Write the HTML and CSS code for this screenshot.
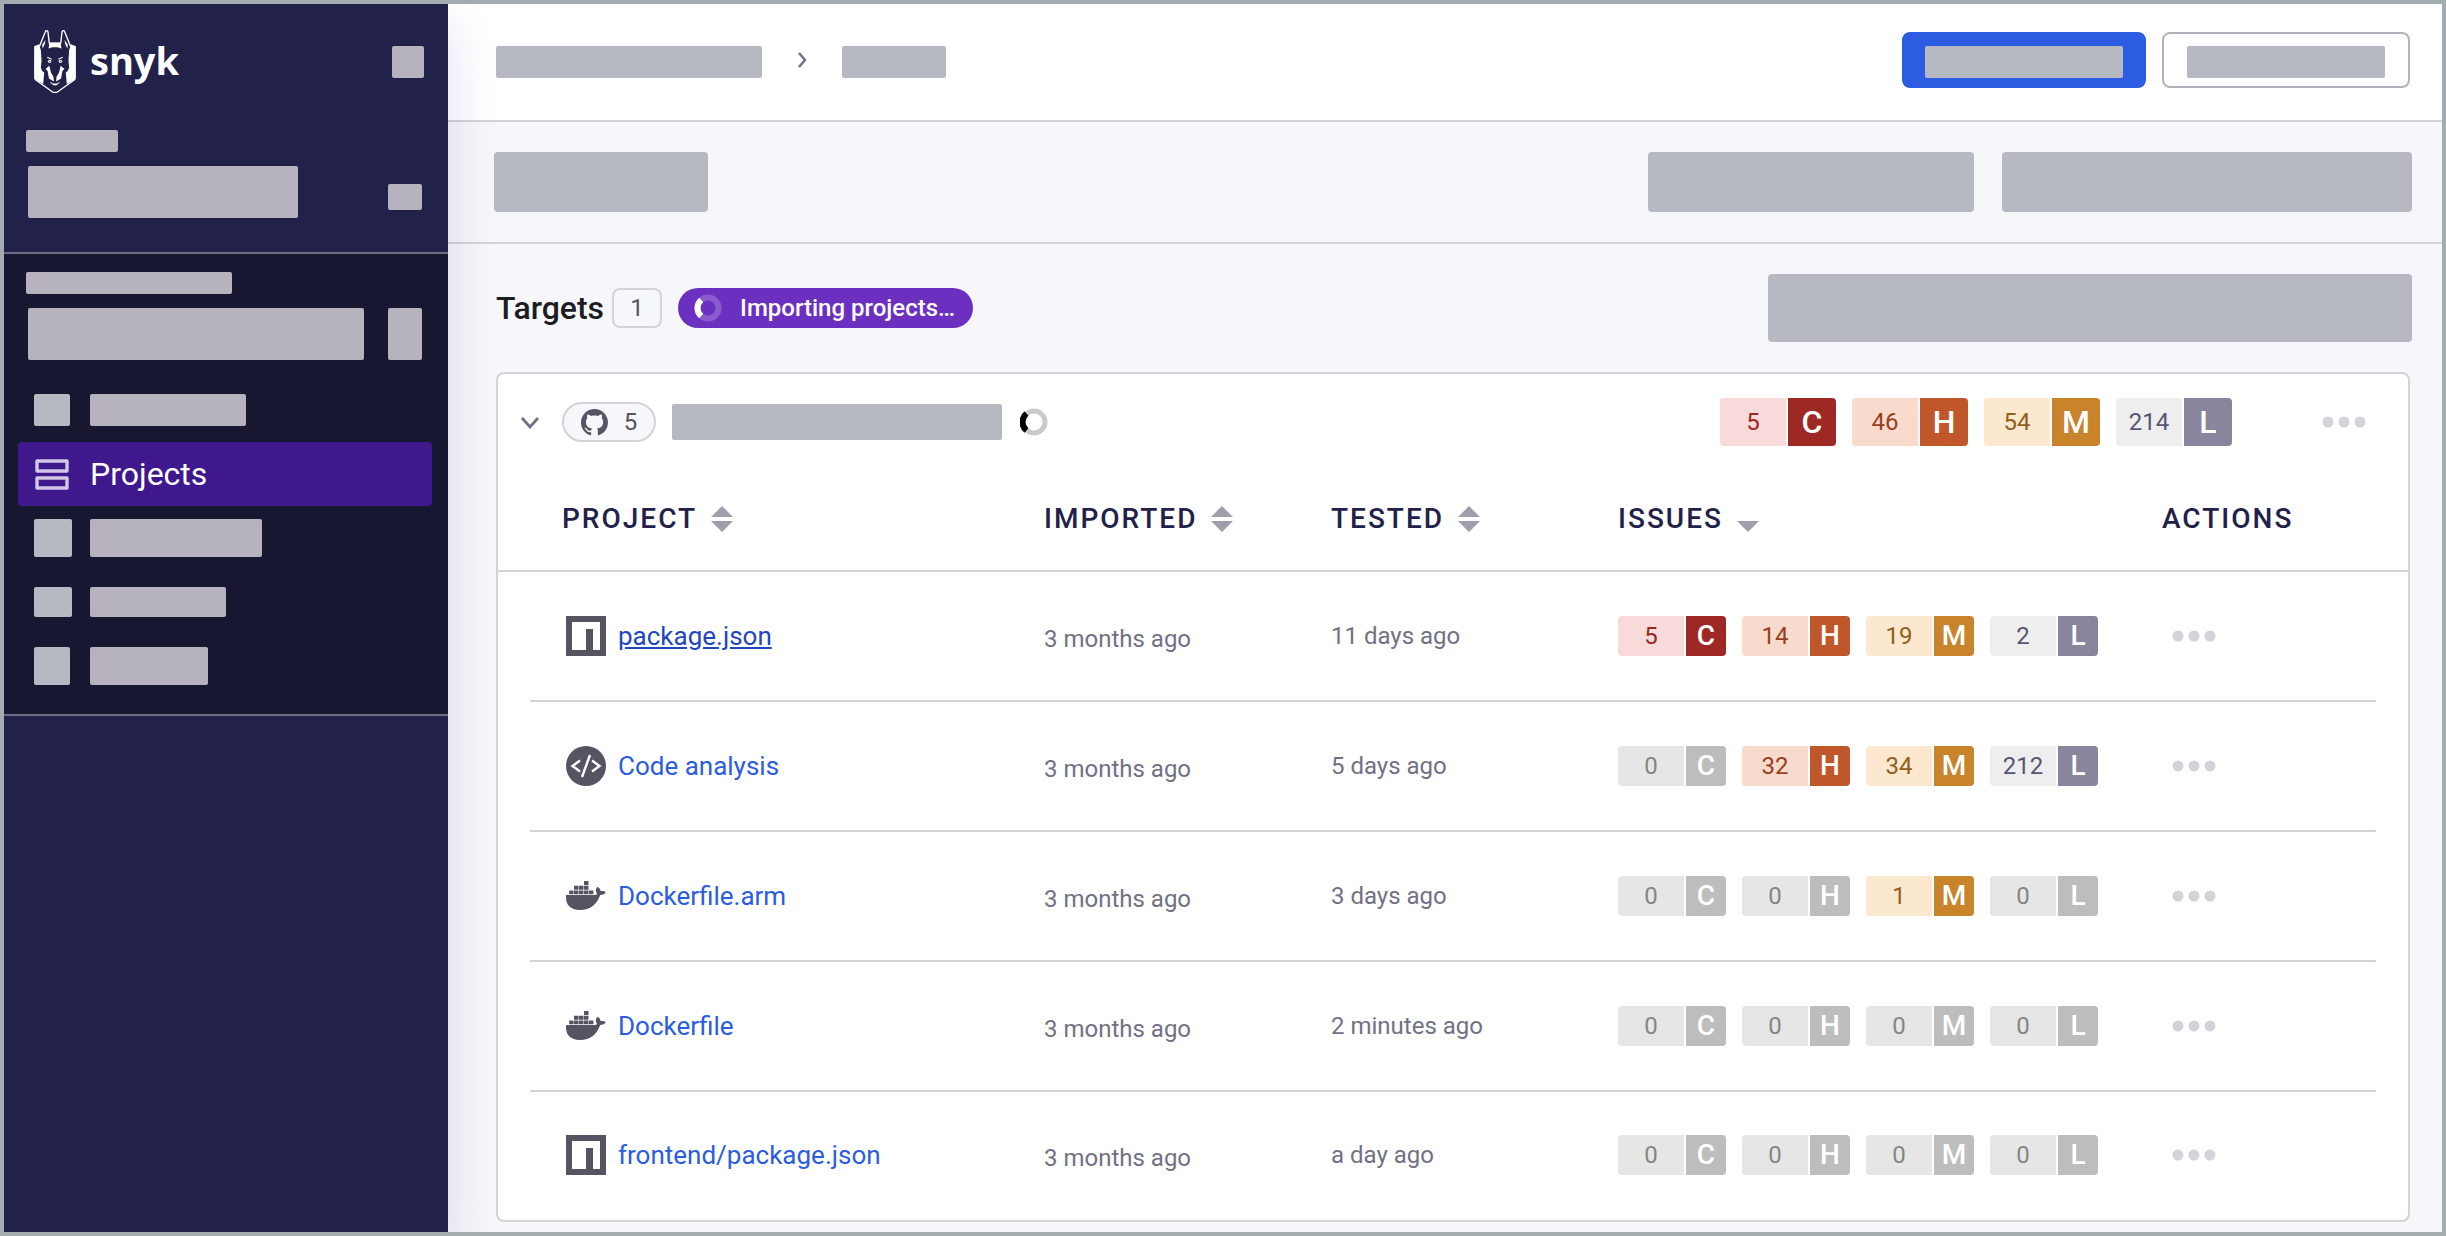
FILE: index.html
```html
<!DOCTYPE html>
<html lang="en">
<head>
<meta charset="utf-8">
<meta name="viewport" content="width=device-width, initial-scale=1">
<title>Snyk – Projects</title>
<link rel="stylesheet" href="styles.css">
</head>
<body>
<svg class="sprite" aria-hidden="true">
  <symbol id="npm" viewBox="0 0 40 40">
    <path fill="#555463" d="M0 0h40v40H0z"/>
    <path fill="#fff" d="M6 6h28v28h-7V13h-7v21H6z"/>
  </symbol>
  <symbol id="code" viewBox="0 0 40 40">
    <circle cx="20" cy="20" r="20" fill="#555463"/>
    <path d="M14 14.500L6.500 20l7.500 5.500M26 14.500l7.500 5.500-7.500 5.500M24 9l-8 22" fill="none" stroke="#fff" stroke-width="2.400"/>
  </symbol>
  <symbol id="docker" viewBox="0 0 40 40">
    <path fill="#555463" d="M18 5h4.500v4H18zM8 9.800h4.500v3.900H8zM13 9.800h4.500v3.900H13zM18 9.800h4.500v3.900H18zM3.200 14.400h4.300v3.900H3.200zM8 14.400h4.500v3.900H8zM13 14.400h4.500v3.900H13zM18 14.400h4.500v3.900H18zM23 14.400h4.400v3.900H23zM0 19h27.500c1.700 0 3-.3 3.600-1-1.600-2-1.800-4.700.3-7.200 2.200 1.200 3 2.600 3.100 4.300 2-.4 3.800-.2 5.300 1-1.100 2.300-3 3-5.600 3C31 28.500 24.500 34 14 34 4 34 0 28.500 0 21z"/>
  </symbol>
  <symbol id="dots" viewBox="0 0 44 12">
    <circle cx="6" cy="6" r="5.500"/><circle cx="22" cy="6" r="5.500"/><circle cx="38" cy="6" r="5.500"/>
  </symbol>
  <symbol id="sort" viewBox="0 0 22 26">
    <path d="M11 0l11 11H0zM0 15h22L11 26z"/>
  </symbol>
  <symbol id="sort-down" viewBox="0 0 22 26">
    <path d="M0 15h22L11 26z"/>
  </symbol>
</svg>

<div class="app">
  <aside class="sidebar">
    <div class="sidebar__top">
      <div class="brand">
        <a class="brand__link" href="#">
          <svg class="brand__mark" viewBox="0 0 124 190" aria-hidden="true">
            <g fill="none" stroke="#fff" stroke-width="4" stroke-linejoin="round">
              <path d="M16 48L34 4q3-5 7 1l4 34h34l4-34q4-6 7-1l18 44"/>
              <path d="M2 146l54 39h12l54-39"/>
              <path d="M39 81l13 6M85 81l-13 6M49 155q13 16 26 0M55 160h14" stroke-width="3"/>
            </g>
            <g fill="#fff">
              <path d="M0 48l15-6 5 18 2 30-2 22 4 10 6 4-3 34-27-15zM124 48l-15-6-5 18-2 30 2 22-4 10-6 4 3 34 27-15z"/>
              <path d="M45 38h34l2 17-11-4H54l-11 4zM34 30l-3 14-6 11-1-12zM90 30l3 14 6 11 1-12z"/>
              <path d="M34 116l11-10 5 20 7 12 2 15-15-9-4-22zM90 116l-11-10-5 20-7 12-2 15 15-9 4-22z"/>
              <circle cx="46" cy="93" r="5"/><circle cx="78" cy="93" r="5"/>
            </g>
            <circle cx="46" cy="93" r="2" fill="#22214a"/><circle cx="78" cy="93" r="2" fill="#22214a"/>
          </svg>
          <span class="brand__name">snyk</span>
        </a>
        <span class="bar bar--side brand__toggle"></span>
      </div>
      <span class="bar bar--side side-label side-label--short"></span>
      <div class="side-row">
        <span class="bar bar--side side-field side-field--group"></span>
        <span class="bar bar--side side-chip side-chip--small"></span>
      </div>
    </div>
    <div class="sidebar__org">
      <span class="bar bar--side side-label side-label--long"></span>
      <div class="side-row">
        <span class="bar bar--side side-field side-field--org"></span>
        <span class="bar bar--side side-chip"></span>
      </div>
      <nav class="nav">
        <a class="nav__item nav__item--a" href="#"><span class="bar nav__icon"></span><span class="bar bar--side nav__text"></span></a>
        <a class="nav__item nav__item--active" href="#" aria-current="page">
          <svg class="nav__glyph" viewBox="0 0 36 32" aria-hidden="true"><path d="M3 3h30v10H3zM3 20h30v10H3z" fill="none" stroke="#d3c8e8" stroke-width="3.400" stroke-linejoin="round"/></svg>
          <span>Projects</span>
        </a>
        <a class="nav__item nav__item--b" href="#"><span class="bar nav__icon"></span><span class="bar bar--side nav__text"></span></a>
        <a class="nav__item nav__item--c" href="#"><span class="bar nav__icon"></span><span class="bar bar--side nav__text"></span></a>
        <a class="nav__item nav__item--d" href="#"><span class="bar nav__icon"></span><span class="bar bar--side nav__text"></span></a>
      </nav>
    </div>
  </aside>

  <main class="main">
    <header class="topbar">
      <nav class="crumbs">
        <a class="bar bar--label crumbs__parent" href="#"></a>
        <svg class="crumbs__sep" viewBox="0 0 10 16" aria-hidden="true"><path d="M2 1l6 7-6 7" fill="none" stroke="#727184" stroke-width="2.500"/></svg>
        <span class="bar bar--label crumbs__current"></span>
      </nav>
      <div class="topbar__actions">
        <button class="btn btn--primary" type="button"><span class="bar bar--label btn__text"></span></button>
        <button class="btn btn--outline" type="button"><span class="bar bar--label btn__text"></span></button>
      </div>
    </header>

    <div class="toolbar">
      <span class="bar toolbar__title"></span>
      <span class="bar toolbar__group"></span>
      <span class="bar toolbar__filter"></span>
    </div>

    <div class="targets">
      <h1 class="targets__title">Targets</h1>
      <span class="targets__count">1</span>
      <span class="status">
        <svg class="status__spinner" viewBox="0 0 28 28" aria-hidden="true"><circle cx="14" cy="14" r="10.500" fill="none" stroke="#8a5bcd" stroke-width="6"/><path d="M7.200 22A10.500 10.500 0 017.200 6" fill="none" stroke="#fff" stroke-width="6"/></svg>
        Importing projects…
      </span>
      <span class="bar targets__search"></span>
    </div>

    <section class="card">
      <div class="card__head">
        <button class="card__toggle" type="button" aria-label="Collapse"><svg viewBox="0 0 24 24" width="24" height="24" aria-hidden="true"><path d="M4 8l8 9 8-9" fill="none" stroke="#727184" stroke-width="2.800"/></svg></button>
        <span class="source">
          <svg viewBox="0 0 16 16" width="27" height="27" aria-hidden="true"><path fill="#555463" d="M8 0C3.580 0 0 3.580 0 8c0 3.540 2.290 6.530 5.470 7.590.4.070.55-.17.55-.38 0-.19-.01-.82-.01-1.490-2.010.37-2.530-.49-2.690-.94-.09-.23-.48-.94-.82-1.130-.28-.15-.68-.52-.01-.53.63-.01 1.080.58 1.230.82.72 1.210 1.870.87 2.330.66.070-.52.28-.87.51-1.070-1.780-.2-3.640-.89-3.640-3.950 0-.87.31-1.590.82-2.150-.08-.2-.36-1.020.08-2.120 0 0 .67-.21 2.200.82.64-.18 1.320-.27 2-.27s1.360.09 2 .27c1.530-1.040 2.200-.82 2.200-.82.44 1.100.16 1.920.08 2.120.51.56.82 1.270.82 2.150 0 3.070-1.870 3.750-3.650 3.950.29.25.54.73.54 1.480 0 1.070-.01 1.930-.01 2.200 0 .21.15.46.55.38A8.010 8.010 0 0016 8c0-4.420-3.580-8-8-8z"/></svg>
          5
        </span>
        <span class="bar card__name"></span>
        <svg class="card__spinner" viewBox="0 0 28 28" aria-hidden="true"><circle cx="14" cy="14" r="11" fill="none" stroke="#cacaca" stroke-width="5"/><path d="M6.500 22.500A11 11 0 016.500 5.500" fill="none" stroke="#000" stroke-width="6"/></svg>
        <div class="badges badges--large">
          <span class="badge badge--c"><span>5</span><b>C</b></span>
          <span class="badge badge--h"><span>46</span><b>H</b></span>
          <span class="badge badge--m"><span>54</span><b>M</b></span>
          <span class="badge badge--l"><span>214</span><b>L</b></span>
        </div>
        <button class="more" type="button" aria-label="More"><svg class="more__dots"><use href="#dots"/></svg></button>
      </div>

      <table class="projects">
        <colgroup><col><col class="col-date"><col class="col-date"><col class="col-issues"><col class="col-actions"></colgroup>
        <thead>
          <tr>
            <th class="first"><button class="sort" type="button">PROJECT<svg class="sort__icon"><use href="#sort"/></svg></button></th>
            <th><button class="sort" type="button">IMPORTED<svg class="sort__icon"><use href="#sort"/></svg></button></th>
            <th><button class="sort" type="button">TESTED<svg class="sort__icon"><use href="#sort"/></svg></button></th>
            <th><button class="sort" type="button">ISSUES<svg class="sort__icon"><use href="#sort-down"/></svg></button></th>
            <th>ACTIONS</th>
          </tr>
        </thead>
        <tbody>
          <tr>
            <td class="first"><div class="project"><svg class="project__icon"><use href="#npm"/></svg><a class="project__link project__link--hover" href="#">package.json</a></div></td>
            <td class="imported">3 months ago</td>
            <td>11 days ago</td>
            <td><div class="badges">
              <span class="badge badge--c"><span>5</span><b>C</b></span>
              <span class="badge badge--h"><span>14</span><b>H</b></span>
              <span class="badge badge--m"><span>19</span><b>M</b></span>
              <span class="badge badge--l"><span>2</span><b>L</b></span>
            </div></td>
            <td><button class="more more--row" type="button" aria-label="More"><svg class="more__dots"><use href="#dots"/></svg></button></td>
          </tr>
          <tr>
            <td class="first"><div class="project"><svg class="project__icon"><use href="#code"/></svg><a class="project__link" href="#">Code analysis</a></div></td>
            <td class="imported">3 months ago</td>
            <td>5 days ago</td>
            <td><div class="badges">
              <span class="badge"><span>0</span><b>C</b></span>
              <span class="badge badge--h"><span>32</span><b>H</b></span>
              <span class="badge badge--m"><span>34</span><b>M</b></span>
              <span class="badge badge--l"><span>212</span><b>L</b></span>
            </div></td>
            <td><button class="more more--row" type="button" aria-label="More"><svg class="more__dots"><use href="#dots"/></svg></button></td>
          </tr>
          <tr>
            <td class="first"><div class="project"><svg class="project__icon"><use href="#docker"/></svg><a class="project__link" href="#">Dockerfile.arm</a></div></td>
            <td class="imported">3 months ago</td>
            <td>3 days ago</td>
            <td><div class="badges">
              <span class="badge"><span>0</span><b>C</b></span>
              <span class="badge"><span>0</span><b>H</b></span>
              <span class="badge badge--m"><span>1</span><b>M</b></span>
              <span class="badge"><span>0</span><b>L</b></span>
            </div></td>
            <td><button class="more more--row" type="button" aria-label="More"><svg class="more__dots"><use href="#dots"/></svg></button></td>
          </tr>
          <tr>
            <td class="first"><div class="project"><svg class="project__icon"><use href="#docker"/></svg><a class="project__link" href="#">Dockerfile</a></div></td>
            <td class="imported">3 months ago</td>
            <td>2 minutes ago</td>
            <td><div class="badges">
              <span class="badge"><span>0</span><b>C</b></span>
              <span class="badge"><span>0</span><b>H</b></span>
              <span class="badge"><span>0</span><b>M</b></span>
              <span class="badge"><span>0</span><b>L</b></span>
            </div></td>
            <td><button class="more more--row" type="button" aria-label="More"><svg class="more__dots"><use href="#dots"/></svg></button></td>
          </tr>
          <tr>
            <td class="first"><div class="project"><svg class="project__icon"><use href="#npm"/></svg><a class="project__link" href="#">frontend/package.json</a></div></td>
            <td class="imported">3 months ago</td>
            <td>a day ago</td>
            <td><div class="badges">
              <span class="badge"><span>0</span><b>C</b></span>
              <span class="badge"><span>0</span><b>H</b></span>
              <span class="badge"><span>0</span><b>M</b></span>
              <span class="badge"><span>0</span><b>L</b></span>
            </div></td>
            <td><button class="more more--row" type="button" aria-label="More"><svg class="more__dots"><use href="#dots"/></svg></button></td>
          </tr>
        </tbody>
      </table>
    </section>
  </main>
</div>
</body>
</html>
```
FILE: styles.css
```css
*, *::before, *::after { box-sizing: border-box; }

body {
  margin: 0;
  font-family: Roboto, "Liberation Sans", sans-serif;
  font-size: 24px;
  line-height: 32px;
  color: #727184;
}

button {
  margin: 0;
  padding: 0;
  border: 0;
  background: none;
  font: inherit;
  color: inherit;
  cursor: pointer;
}

a { text-decoration: none; }
svg { display: block; flex: none; }

.sprite { display: none; }

.app {
  display: flex;
  min-height: 100vh;
  border: 4px solid #a3adaf;
  background: #f6f7fb;
  overflow: hidden;
}

/* Placeholder blocks */
.bar {
  display: block;
  flex: none;
  border-radius: 2px;
  background: #b6b9c1;
}
.bar--side { background: #b7b3be; }
.bar--label { height: 32px; margin-top: 4px; }

/* Sidebar */
.sidebar {
  position: relative;
  z-index: 1;
  flex: none;
  width: 444px;
  background: #22214a;
  box-shadow: 0 24px 48px rgba(34, 33, 100, 0.14);
}
.sidebar__top {
  padding: 24px 24px 34px;
  border-bottom: 2px solid #6f6d80;
}
.sidebar__org {
  padding: 18px 16px 16px 14px;
  border-bottom: 2px solid #6f6d80;
  background: #181731;
}
.brand {
  display: flex;
  align-items: center;
  justify-content: space-between;
  height: 68px;
  margin-bottom: 34px;
  padding-left: 6px;
}
.brand__link {
  display: flex;
  align-items: center;
  gap: 14px;
  color: #fff;
}
.brand__mark { width: 42px; height: 64px; }
.brand__name {
  padding-bottom: 4px;
  font-family: "Open Sans", "Noto Sans", sans-serif;
  font-size: 38px;
  font-weight: 700;
}
.brand__toggle { width: 32px; height: 32px; }

.side-label { height: 22px; margin-bottom: 14px; }
.side-label--short { width: 92px; margin-left: -2px; }
.side-label--long { width: 206px; margin-left: 8px; }
.side-row {
  display: flex;
  align-items: center;
  justify-content: space-between;
}
.sidebar__top .side-row { padding-right: 2px; }
.sidebar__org .side-row { padding: 0 10px; }
.side-field { height: 52px; }
.side-field--group { width: 270px; }
.side-field--org { width: 336px; }
.side-chip { width: 34px; height: 52px; }
.side-chip--small { height: 26px; margin-top: 10px; }

.nav { margin-top: 18px; }
.nav__item {
  display: grid;
  grid-template-columns: 38px 1fr;
  column-gap: 18px;
  align-items: center;
  height: 64px;
  padding: 0 16px;
  color: #fff;
  font-size: 32px;
  line-height: 40px;
}
.nav__item--active { border-radius: 4px; background: #3f188d; }
.nav__glyph { width: 36px; height: 32px; }
.nav__icon { width: 38px; height: 38px; }
.nav__text { height: 38px; }
.nav__item--a .bar { height: 32px; }
.nav__item--a .nav__icon, .nav__item--d .nav__icon { width: 36px; }
.nav__item--c .bar { height: 30px; }
.nav__item--a .nav__text { width: 156px; }
.nav__item--b .nav__text { width: 172px; }
.nav__item--c .nav__text { width: 136px; }
.nav__item--d .nav__text { width: 118px; }

/* Main column */
.main { flex: 1; min-width: 0; }

.topbar {
  display: flex;
  align-items: center;
  justify-content: space-between;
  padding: 28px 32px 32px 48px;
  border-bottom: 2px solid #d3d3d9;
  background: #fff;
}
.crumbs { display: flex; align-items: center; }
.crumbs__parent { width: 266px; }
.crumbs__sep { width: 10px; height: 16px; margin: 0 35px; }
.crumbs__current { width: 104px; }
.topbar__actions { display: flex; gap: 16px; }
.btn {
  display: flex;
  align-items: center;
  height: 56px;
  padding: 0 21px;
  border: 2px solid #b3b2bd;
  border-radius: 8px;
}
.btn--primary { border-color: #2b5ce2; background: #2b5ce2; }
.btn--outline { padding: 0 23px; background: #fff; }
.btn__text { width: 198px; }

.toolbar {
  display: flex;
  gap: 28px;
  padding: 30px 30px 30px 46px;
  border-bottom: 2px solid #d3d3d9;
}
.toolbar .bar { height: 60px; border-radius: 4px; }
.toolbar__title { width: 214px; margin-right: auto; }
.toolbar__group { width: 326px; }
.toolbar__filter { width: 410px; }

.targets {
  display: flex;
  align-items: center;
  padding: 30px 30px 30px 48px;
}
.targets__title {
  margin: 0;
  color: #1c1c21;
  font-size: 32px;
  font-weight: 500;
  line-height: 40px;
}
.targets__count {
  width: 50px;
  margin: 0 16px 0 8px;
  border: 2px solid #d3d3d9;
  border-radius: 8px;
  color: #555463;
  line-height: 36px;
  text-align: center;
}
.status {
  display: flex;
  align-items: center;
  gap: 18px;
  height: 40px;
  padding: 0 18px 0 16px;
  border-radius: 20px;
  background: #6b30bf;
  color: #fff;
  font-weight: 500;
}
.status__spinner { width: 28px; height: 28px; }
.targets__search {
  width: 644px;
  height: 68px;
  margin-left: auto;
  border-radius: 4px;
}

/* Target card */
.card {
  margin: 0 32px 10px 48px;
  border: 2px solid #d3d3d9;
  border-radius: 8px;
  background: #fff;
}
.card__head {
  display: flex;
  align-items: center;
  height: 96px;
  padding: 0 42px 0 20px;
}
.card__toggle { margin-right: 20px; }
.source {
  display: flex;
  align-items: center;
  justify-content: center;
  gap: 16px;
  width: 94px;
  height: 40px;
  border: 2px solid #d3d3d9;
  border-radius: 20px;
  background: #f6f7fb;
  color: #555463;
}
.card__name { width: 330px; height: 36px; margin: 0 18px 0 16px; }
.card__spinner { width: 28px; height: 28px; }
.card__head .badges { margin-left: auto; margin-right: 90px; }

.badges { display: flex; gap: 16px; }
.badge {
  display: grid;
  grid-template-columns: 66px 40px;
  column-gap: 2px;
  color: #858585;
  line-height: 40px;
  text-align: center;
}
.badge span { border-radius: 4px 0 0 4px; background: #e6e6e6; }
.badge b {
  border-radius: 0 4px 4px 0;
  background: #bdbdbd;
  color: #fff;
  font-size: 28px;
  font-weight: 500;
}
.badges--large .badge { grid-template-columns: 66px 48px; line-height: 48px; }
.badges--large .badge b { font-size: 32px; }
.badge--c { color: #9b2823; }
.badge--c span { background: #f9dada; }
.badge--c b { background: #9e2823; }
.badge--h { color: #97401f; }
.badge--h span { background: #f9dbcd; }
.badge--h b { background: #c0572b; }
.badge--m { color: #90601c; }
.badge--m span { background: #fbe8ce; }
.badge--m b { background: #c9832b; }
.badge--l { color: #585574; }
.badge--l span { background: #eeeeee; }
.badge--l b { background: #88859c; }

.more { display: block; }
.more--row { margin-left: 10px; }
.more__dots { width: 44px; height: 12px; fill: #d3d3d9; }

/* Projects table */
.projects {
  width: 100%;
  table-layout: fixed;
  border-collapse: separate;
  border-spacing: 0;
}
.col-date { width: 287px; }
.col-issues { width: 544px; }
.col-actions { width: 246px; }
.projects th, .projects td {
  padding: 0;
  text-align: left;
  vertical-align: middle;
}
.projects .first { padding-left: 64px; }
.projects th {
  height: 102px;
  padding-bottom: 2px;
  border-bottom: 2px solid #d3d3d9;
  color: #22214a;
  font-size: 28px;
  font-weight: 500;
  letter-spacing: 2px;
}
.projects td { height: 130px; padding-bottom: 2px; }
.projects tbody tr:not(:last-child) {
  background: linear-gradient(#d3d3d9, #d3d3d9) bottom center / calc(100% - 64px) 2px no-repeat;
}
.projects tbody tr:last-child td { height: 128px; }
.projects .imported { padding-top: 6px; }

.sort {
  display: flex;
  align-items: center;
  gap: 14px;
  letter-spacing: inherit;
}
.sort__icon { width: 22px; height: 26px; fill: #9f9eac; }

.project { display: flex; align-items: center; gap: 12px; padding-left: 4px; }
.project__icon { width: 40px; height: 40px; }
.project__link { color: #2b5ce2; font-size: 26px; }
.project__link:hover, .project__link--hover {
  color: #1f46c0;
  text-decoration: underline;
}
```
